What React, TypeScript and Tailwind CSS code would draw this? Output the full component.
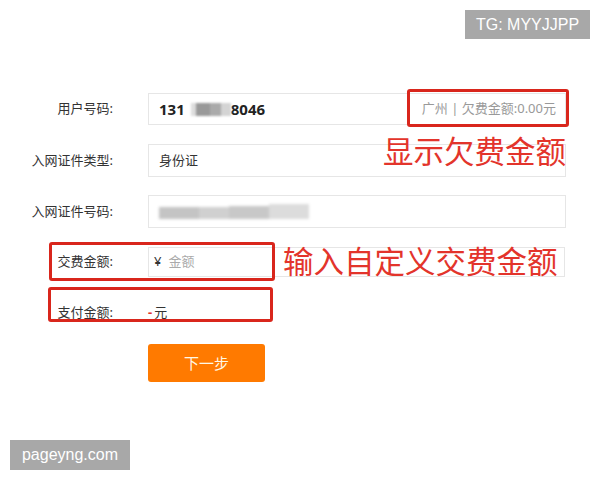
import React from "react";

const cjk = { fontFamily: '"Noto Sans", "Noto Sans CJK SC", sans-serif' };
const latin = { fontFamily: '"Liberation Sans", Arial, sans-serif' };

function Label({ text }: { text: string }) {
	return <div className="w-[113px] shrink-0 text-right text-[13px] text-[#333]">{text}</div>;
}

function RedBox({ className }: { className: string }) {
	return <div className={"pointer-events-none absolute rounded-[3px] border-[3px] border-[#d9261c] " + className} />;
}

export default function App() {
	return (
		<div className="relative h-[480px] w-[600px] overflow-hidden bg-white" style={cjk}>
			<div className="flex flex-col pt-[93px]">
				{/* 用户号码 */}
				<div className="relative flex h-[32px] items-center gap-[35px]">
					<Label text="用户号码:" />
					<div className="flex h-[32px] w-[418px] items-center border border-[#e6e6e6] pl-[10px]">
						<span className="text-[15px] font-bold text-[#222]">131</span>
						<div className="ml-[6px] flex h-[13px] blur-[1px]">
							<div className="w-[5px] bg-[#ddd]" />
							<div className="w-[14px] bg-[#999]" />
							<div className="w-[11px] bg-[#aaa]" />
							<div className="w-[10px] bg-[#d4d4d4]" />
						</div>
						<span className="text-[15px] font-bold text-[#222]">8046</span>
						<span className="ml-auto mr-[9px] text-[13px] text-[#999]">广州 | 欠费金额:0.00元</span>
					</div>
					<RedBox className="left-[407px] top-[-4px] h-[38px] w-[162px]" />
				</div>

				{/* 入网证件类型 */}
				<div className="relative mt-[19px] flex h-[33px] items-center gap-[35px]">
					<Label text="入网证件类型:" />
					<div className="flex h-[33px] w-[418px] items-center border border-[#e6e6e6] pl-[10px] text-[13px] text-[#333]">
						身份证
					</div>
					<div className="absolute left-[383px] top-[-8px] text-[30.5px] leading-[30px] text-[#e3342b]">显示欠费金额</div>
				</div>

				{/* 入网证件号码 */}
				<div className="relative mt-[18px] flex h-[33px] items-center gap-[35px]">
					<Label text="入网证件号码:" />
					<div className="flex h-[33px] w-[418px] items-center border border-[#e6e6e6] pl-[10px]">
						<div className="flex h-[14px] items-end blur-[1.5px]">
							<div className="h-[12px] w-[40px] bg-[#c4c4c4]" />
							<div className="h-[12px] w-[30px] bg-[#d0d0d0]" />
							<div className="h-[13px] w-[40px] bg-[#c8c8c8]" />
							<div className="h-[15px] w-[40px] bg-[#dcdcdc]" />
						</div>
					</div>
				</div>

				{/* 交费金额 */}
				<div className="relative mt-[19px] flex h-[30px] items-center gap-[35px]">
					<Label text="交费金额:" />
					<div className="flex h-[30px] w-[417px] items-center border border-[#e6e6e6] pl-[5px] text-[13px]">
						<span className="text-[#333]">¥</span>
						<span className="ml-[7px] text-[#aaa]">金额</span>
					</div>
					<RedBox className="left-[49px] top-[-5px] h-[39px] w-[226px]" />
					<div className="absolute left-[283px] top-[-1px] text-[30.5px] leading-[30px] text-[#e3342b]">输入自定义交费金额</div>
				</div>

				{/* 支付金额 */}
				<div className="relative mt-[21px] flex h-[30px] items-center gap-[35px]">
					<Label text="支付金额:" />
					<div className="flex items-center text-[13px] text-[#333]">
						<span className="mr-[2px] font-bold text-[#e3342b]">-</span>
						<span>元</span>
					</div>
					<RedBox className="left-[48px] top-[-11px] h-[35px] w-[225px]" />
				</div>

				<div className="mt-[16px] pl-[148px]">
					<button className="flex h-[38px] w-[117px] items-center justify-center rounded-[3px] bg-[#ff7a00] text-[15px] text-[#fff8e6]">
						下一步
					</button>
				</div>
			</div>

			{/* watermarks */}
			<div className="absolute left-[465px] top-[10px] flex h-[29px] w-[125px] items-center justify-center bg-[#a8a8a8] text-[16px] text-white" style={latin}>
				TG: MYYJJPP
			</div>
			<div className="absolute left-[10px] top-[440px] flex h-[30px] w-[120px] items-center justify-center bg-[#a8a8a8] text-[16px] text-white" style={latin}>
				pageyng.com
			</div>
		</div>
	);
}
